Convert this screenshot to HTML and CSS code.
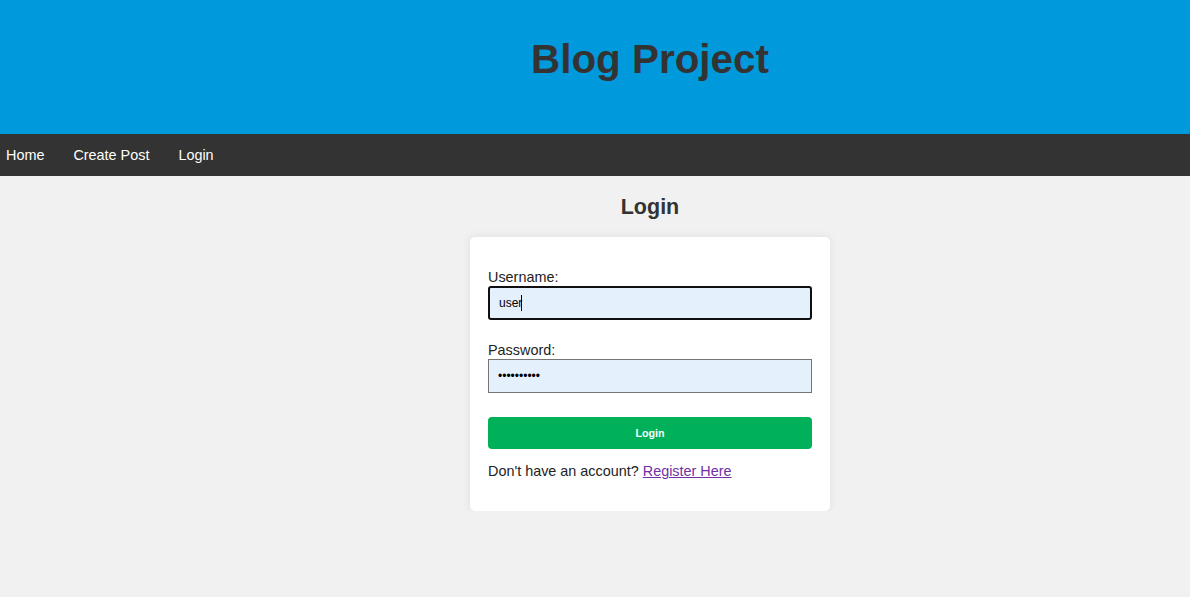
FILE: index.html
```html
<!DOCTYPE html>
<html lang="en">
<head>
<meta charset="utf-8">
<title>Blog Project - Login</title>
<link rel="stylesheet" href="styles.css">
</head>
<body>
<header class="site-header">
  <h1 class="site-title">Blog Project</h1>
</header>
<nav class="site-nav">
  <a href="#" class="nav-link">Home</a>
  <a href="#" class="nav-link">Create Post</a>
  <a href="#" class="nav-link">Login</a>
</nav>
<main class="main">
  <h2 class="page-title">Login</h2>
  <form class="card">
    <label class="field-label" for="username">Username:</label>
    <div class="input-wrap">
      <input class="field-input focused" id="username" type="text" value="user">
      <span class="caret"></span>
    </div>
    <label class="field-label second" for="password">Password:</label>
    <input class="field-input" id="password" type="password" value="password12">
    <button class="submit" type="button">Login</button>
    <p class="register">Don't have an account? <a href="#" class="register-link">Register Here</a></p>
  </form>
</main>
</body>
</html>
```
FILE: styles.css
```css
html, body {
  margin: 0;
  padding: 0;
}
body {
  font-family: "Liberation Sans", Arial, sans-serif;
  background: #f1f1f1;
  color: #222;
}
.site-header {
  background: #0099db;
  height: 134px;
  padding-left: 110px;
  display: flex;
  align-items: center;
  justify-content: center;
  box-sizing: border-box;
}
.site-title {
  margin: 0 0 16px 0;
  font-size: 40.4px;
  line-height: 46px;
  font-weight: bold;
  color: #333;
}
.site-nav {
  background: #333;
  height: 42px;
  display: flex;
  align-items: center;
  gap: 29px;
  padding-left: 6px;
}
.nav-link {
  color: #fff;
  text-decoration: none;
  font-size: 14.4px;
}
.main {
  padding-left: 110px;
  display: flex;
  flex-direction: column;
  align-items: center;
}
.page-title {
  margin: 19px 0 0 0;
  font-size: 21.5px;
  line-height: 25px;
  color: #333;
}
.card {
  margin-top: 17px;
  width: 360px;
  box-sizing: border-box;
  background: #fff;
  border-radius: 5px;
  box-shadow: 0 0 10px rgba(0, 0, 0, 0.08);
  padding: 32px 18px 31px 18px;
  display: flex;
  flex-direction: column;
}
.field-label {
  font-size: 14.4px;
  line-height: 17px;
  color: #222;
}
.field-label.second {
  margin-top: 22px;
}
.input-wrap {
  position: relative;
}
.field-input {
  display: block;
  width: 100%;
  box-sizing: border-box;
  height: 34px;
  margin: 0;
  padding: 0 9px;
  font-family: "Liberation Sans", Arial, sans-serif;
  font-size: 12px;
  color: #000;
  background: #e5f0fd;
  border: 1px solid #767676;
  border-radius: 0;
  outline: none;
}
.field-input.focused {
  border: 2px solid #101010;
  border-radius: 3px;
}
.caret {
  position: absolute;
  left: 33px;
  top: 9px;
  width: 1px;
  height: 16px;
  background: #000;
}
.submit {
  margin-top: 24px;
  height: 32px;
  border: none;
  border-radius: 4px;
  background: #00b159;
  color: #fff;
  font-family: "Liberation Sans", Arial, sans-serif;
  font-weight: bold;
  font-size: 10.7px;
  cursor: pointer;
}
.register {
  margin: 14px 0 0 0;
  font-size: 14.4px;
  line-height: 17px;
  color: #222;
}
.register-link {
  color: #7130a3;
}
```
